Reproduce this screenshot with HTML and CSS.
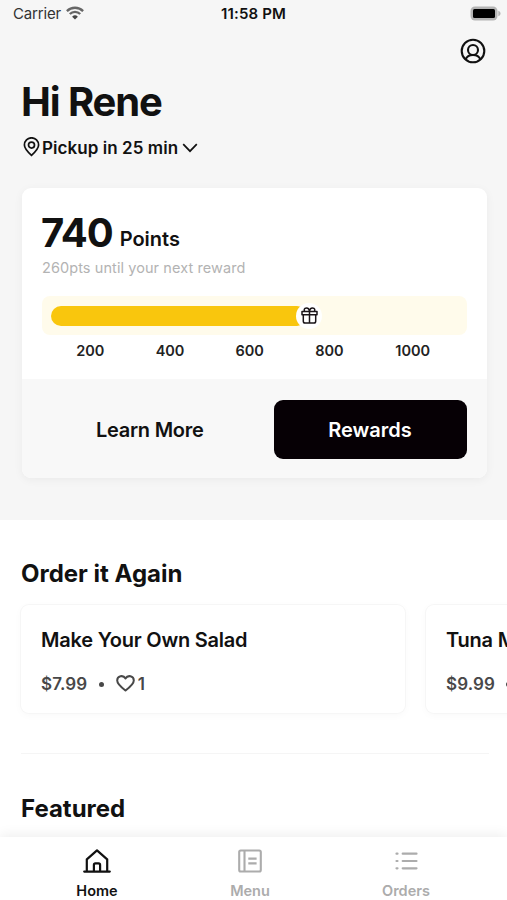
FILE: index.html
```html
<!DOCTYPE html>
<html lang="en">
<head>
<meta charset="utf-8">
<meta name="viewport" content="width=device-width, initial-scale=1">
<title>Home</title>
<link rel="stylesheet" href="styles.css">
</head>
<body>
<div class="app">
  <section class="hero">
    <div class="status">
      <div class="carrier"><span class="carrier-name">Carrier</span>
        <svg width="18" height="14" viewBox="0 0 18 14" fill="none" stroke="#444" stroke-width="2.3"><path d="M.9 5.1a11.5 11.5 0 0 1 16.2 0M3.8 8a7.3 7.3 0 0 1 10.4 0" stroke="#666"/><path d="M9 13.6 6.1 10.7a4.1 4.1 0 0 1 5.800 0z" fill="#444" stroke="none"/></svg>
      </div>
      <span class="time">11:58 PM</span>
      <svg class="battery" width="31" height="15" viewBox="0 0 31 15"><rect x=".5" y=".5" width="27" height="14" rx="4.5" fill="#b4b4b4"/><path d="M28.3 4.8c3 1.2 3 4.2 0 5.4z" fill="#b4b4b4"/><rect x="3" y="3" width="22" height="9" rx="1.5" fill="#000"/></svg>
    </div>
    <div class="account">
      <svg width="26" height="26" viewBox="0 0 26 26" fill="none" stroke="#111" stroke-width="2.1"><circle cx="13" cy="13" r="11.3"/><circle cx="13" cy="12" r="5"/><path d="M5.500 21.500c1.100-2.800 3.200-4.500 7.500-4.500s6.400 1.700 7.500 4.500"/></svg>
    </div>
    <h1 class="greeting">Hi Rene</h1>
    <div class="pickup">
      <svg width="17" height="20" viewBox="0 0 17 20" fill="none" stroke="#111" stroke-width="1.7"><path d="M8.500 18.300C4.500 14.600 1.400 11.500 1.400 7.900a7.100 7.100 0 0 1 14.200 0c0 3.600-3.100 6.700-7.100 10.400z"/><circle cx="8.500" cy="8.100" r="3"/></svg>
      <span class="pickup-text">Pickup in 25 min</span>
      <svg class="chevron" width="16" height="10" viewBox="0 0 16 10" fill="none" stroke="#111" stroke-width="1.700"><path d="m1.200 1.200 6.800 7 6.800-7"/></svg>
    </div>
    <div class="points-card">
      <div class="points-body">
        <div class="score"><span class="score-value">740</span><span class="score-unit">Points</span></div>
        <p class="until">260pts until your next reward</p>
        <div class="track">
          <div class="fill"></div>
          <div class="gift"><svg width="17" height="17" viewBox="0 0 17 17" fill="none" stroke="#1a1418" stroke-width="1.500" stroke-linejoin="round"><path d="M1 4.600h15v3.200H1zM2.300 7.800h12.400v6.400a1.800 1.800 0 0 1-1.800 1.800H4.100a1.800 1.800 0 0 1-1.800-1.800zM8.500 4.600V16M8.500 4.600C8.300 2.300 7.200.9 5.500.9 3 .9 2.600 3.300 4 4.600M8.500 4.600C8.700 2.300 9.800.9 11.500.9c2.500 0 2.900 2.400 1.500 3.700"/></svg></div>
        </div>
        <div class="scale"><span>200</span><span>400</span><span>600</span><span>800</span><span>1000</span></div>
      </div>
      <div class="points-actions"><a class="learn">Learn More</a><a class="rewards">Rewards</a></div>
    </div>
  </section>
  <main class="content">
    <h2 class="order-title">Order it Again</h2>
    <div class="orders">
      <article class="item">
        <h3>Make Your Own Salad</h3>
        <div class="meta"><span class="price">$7.99</span><i class="dot"></i><svg width="19" height="17" viewBox="0 0 19 17" fill="none" stroke="#484848" stroke-width="2" stroke-linejoin="round"><path d="M9.500 15.500C5.500 12.500 1.200 9.400 1.200 5.600c0-4.900 6-5.900 8.300-2.200 2.300-3.700 8.300-2.700 8.300 2.200 0 3.800-4.300 6.900-8.300 9.900z"/></svg><span class="likes">1</span></div>
      </article>
      <article class="item">
        <h3>Tuna Melt</h3>
        <div class="meta"><span class="price">$9.99</span><i class="dot"></i></div>
      </article>
    </div>
    <h2 class="featured-title">Featured</h2>
  </main>
  <nav class="tabs">
    <a class="tab active"><svg width="28" height="24" viewBox="0 0 28 24" fill="none" stroke="currentColor" stroke-width="2.200" stroke-linejoin="round" stroke-linecap="round"><path d="M1.200 22.600h25.600M3.800 22.400V10.300L14 1.400l10.200 8.900v12.100M10.900 22.400v-6.500a1.500 1.500 0 0 1 1.500-1.500h3.200a1.500 1.500 0 0 1 1.500 1.500v6.500"/></svg><span>Home</span></a>
    <a class="tab menu"><svg width="24" height="24" viewBox="0 0 24 24" fill="none" stroke="currentColor" stroke-width="2.100"><rect x="1.200" y="1.500" width="21.600" height="21" rx="1.500"/><path d="M6.500 1.500v21M10.300 9.600h8.300M10.300 14.400h8.300"/></svg><span>Menu</span></a>
    <a class="tab"><svg width="24" height="24" viewBox="0 0 24 24" fill="none" stroke="currentColor" stroke-width="2.200" stroke-linecap="round"><path d="M8.700 4.700H22.500M8.700 12H22.500M8.700 19.300H22.500"/><path d="M2.500 4.700h1M2.500 12h1M2.500 19.300h1"/></svg><span>Orders</span></a>
  </nav>
</div>
</body>
</html>
```

FILE: styles.css
```css
* { box-sizing: border-box; }
body { margin: 0; background: #fff; color: #111; font-family: Inter, "Liberation Sans", sans-serif; }
h1, h2, h3, p { margin: 0; }
svg { display: block; flex: none; }
.app { height: 900px; display: flex; flex-direction: column; overflow: hidden; }
.hero { flex: none; height: 520px; background: #f6f6f6; padding: 0 20px 0 22px; white-space: nowrap; }

.status { height: 28px; margin: 0 -13px 0 -9px; display: grid; grid-template-columns: 208px 1fr auto; align-items: center; font-size: 15px; line-height: 28px; }
.carrier { display: flex; align-items: center; gap: 5px; color: #333; }
.carrier-name { letter-spacing: -.15px; }
.carrier svg { margin-top: -2px; }
.time { font-weight: 600; letter-spacing: .15px; }
.battery { margin: -2px -1px 0 0; }

.account { height: 46px; padding-top: 10px; display: flex; justify-content: flex-end; align-items: flex-start; padding-right: 1px; }
.greeting { margin-left: -1px; padding-top: 1px; height: 54px; font-size: 40px; line-height: 54px; font-weight: 700; letter-spacing: -1.1px; }
.pickup { height: 38px; display: flex; align-items: center; padding-left: 1px; font-size: 17px; font-weight: 600; }
.pickup-text { margin-left: 2px; padding-top: 1px; letter-spacing: .06px; }
.chevron { margin-left: 4px; margin-top: 2px; }

.points-card { margin-top: 22px; width: 465px; height: 290px; border-radius: 9px; overflow: hidden; background: #fff; box-shadow: 0 2px 10px rgba(0,0,0,.05); }
.points-body { height: 191px; padding: 20px 20px 0; }
.score { display: flex; align-items: baseline; gap: 7px; line-height: 50px; height: 50px; }
.score-value { margin-left: -1px; font-size: 40px; font-weight: 700; letter-spacing: -1.1px; }
.score-unit { padding-bottom: 1px; margin-top: -1px; font-size: 20px; font-weight: 600; transform: translateY(-1px); }
.until { font-size: 14.5px; line-height: 20px; color: #b3b3b3; letter-spacing: .08px; }
.track { margin-top: 18px; height: 39px; border-radius: 8px; background: #fffbeb; display: flex; align-items: center; padding: 0 9px; }
.fill { width: 256px; height: 20px; border-radius: 10px; background: #f9c60d; }
.gift { width: 26px; height: 26px; margin-left: -11px; border-radius: 50%; background: #fff; display: grid; place-items: center; }
.scale { display: grid; grid-template-columns: 79.7px 79.7px 79.7px 79.7px 87px; padding-left: 8.5px; text-align: center; font-size: 14.5px; font-weight: 600; line-height: 31px; color: #222; }
.points-actions { height: 99px; padding: 21px 20.5px 0 20px; background: #f8f8f8; display: grid; grid-template-columns: 1fr 193px; column-gap: 16px; font-size: 20px; line-height: 60px; font-weight: 600; text-align: center; }
.learn { letter-spacing: -.25px; }
.rewards { height: 59px; border-radius: 9px; background: #060005; color: #fff; }

.content { height: 317px; flex: none; padding-left: 21px; overflow: hidden; white-space: nowrap; }
h2 { font-size: 24px; line-height: 32px; font-weight: 700; letter-spacing: 0; }
.order-title { margin-top: 38px; }
.orders { display: flex; gap: 21px; margin: 15px 18px 0 0; height: 149px; border-bottom: 1px solid #f5f5f5; }
.item { flex: none; width: 384px; height: 108px; border-radius: 8px; background: #fff; padding: 20px 20px 0; box-shadow: 0 0 0 1px #f6f6f6, 0 2px 8px rgba(0,0,0,.03); }
h3 { font-size: 20px; line-height: 30px; font-weight: 600; letter-spacing: -.22px; }
.meta { height: 30px; margin-top: 13px; display: flex; align-items: center; color: #484848; font-size: 17px; font-weight: 600; }
.price { padding-top: 1px; letter-spacing: .1px; }
.dot { width: 5px; height: 5px; border-radius: 50%; background: #484848; margin: 2px 12px 0 11.5px; }
.likes { margin-left: 3px; padding-top: 1px; }
.featured-title { margin-top: 39px; }

.tabs { flex: none; height: 63px; position: relative; background: #fff; box-shadow: 0 -2px 12px rgba(0,0,0,.07); display: flex; justify-content: space-between; padding: 0 51px 0 47px; }
.tab { width: 100px; display: flex; flex-direction: column; align-items: center; padding-top: 12px; color: #acacac; font-size: 14.5px; line-height: 20px; font-weight: 600; }
.tab span { margin-top: 8px; }
.menu { margin-left: -3px; }
.active { color: #111; }
```
